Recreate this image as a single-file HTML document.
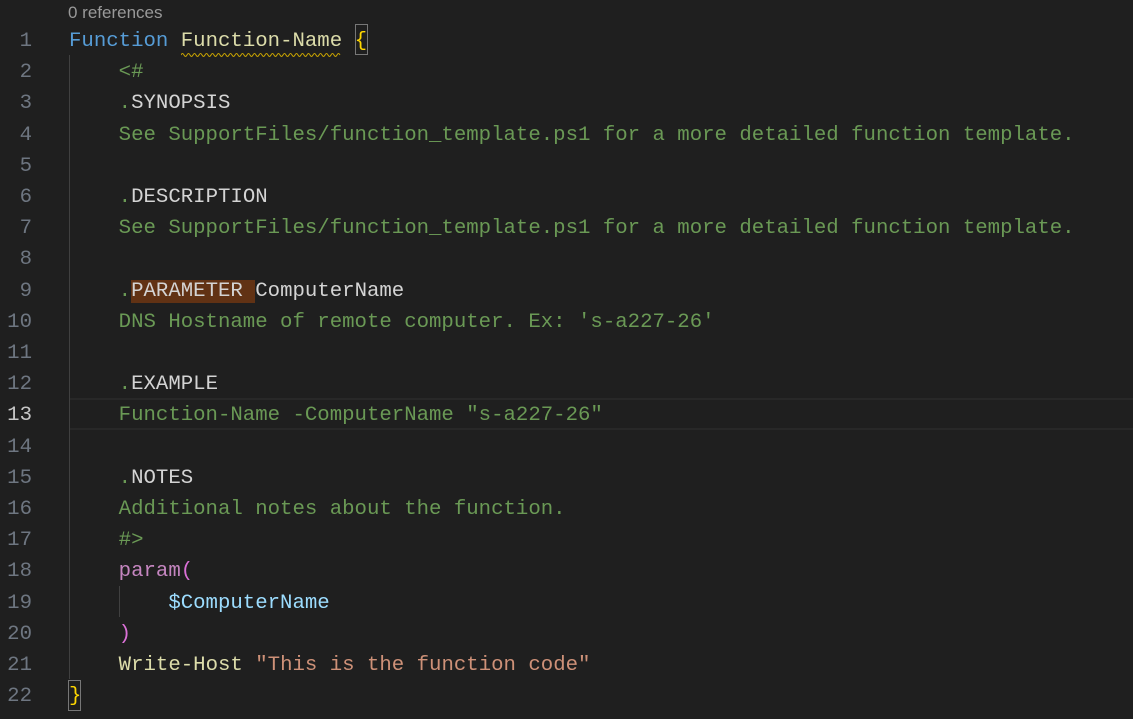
<!DOCTYPE html>
<html><head><meta charset="utf-8"><style>
html,body{margin:0;padding:0;background:#1f1f1f;width:1133px;height:719px;overflow:hidden}
.cl{position:absolute;left:68px;top:3px;font:17px "Liberation Sans",sans-serif;color:#999}
.w{position:absolute;left:0;top:6px;width:1133px;height:713px}
.r{position:absolute;left:0;height:31.2px;line-height:31.2px;width:1133px;font:20.7px "Liberation Mono",monospace;white-space:pre}
.n{position:absolute;right:1101px;color:#6e7681;text-align:right}
.t{position:absolute;left:69px;color:#d4d4d4}
.c{color:#6a9955}.k{color:#569cd6}.f{color:#dcdcaa}.y{color:#ffd700}.p{color:#c586c0}.v{color:#9cdcfe}.s{color:#ce9178}.o{color:#da70d6}
.g{position:absolute;left:69px;width:1px;background:#404040}
</style></head><body>
<div class="cl">0 references</div>
<div style="position:absolute;left:69px;top:398px;width:1064px;height:28px;border-top:2px solid #282828;border-bottom:2px solid #282828"></div>
<div class="g" style="top:55px;height:624px"></div>
<div class="g" style="left:119px;top:586px;height:31px"></div>
<div style="position:absolute;left:355px;top:24px;width:11px;height:29px;border:1px solid #777"></div>
<div style="position:absolute;left:68px;top:680px;width:11px;height:29px;border:1px solid #777"></div>
<svg style="position:absolute;left:181px;top:52px" width="162" height="5"><path d="M0 3 Q1.5 0 3 3 T6 3 T9 3 T12 3 T15 3 T18 3 T21 3 T24 3 T27 3 T30 3 T33 3 T36 3 T39 3 T42 3 T45 3 T48 3 T51 3 T54 3 T57 3 T60 3 T63 3 T66 3 T69 3 T72 3 T75 3 T78 3 T81 3 T84 3 T87 3 T90 3 T93 3 T96 3 T99 3 T102 3 T105 3 T108 3 T111 3 T114 3 T117 3 T120 3 T123 3 T126 3 T129 3 T132 3 T135 3 T138 3 T141 3 T144 3 T147 3 T150 3 T153 3 T156 3 T159 3" fill="none" stroke="#cca700" stroke-width="1"/></svg>
<div class="w">
<div class="r" style="top:24px"><span class="n">1</span><span class="t"><span class="k">Function</span> <span class="f">Function-Name</span> <span class="y">{</span></span></div>
<div class="r" style="top:55.2px"><span class="n">2</span><span class="t c">    &lt;#</span></div>
<div class="r" style="top:86.4px"><span class="n">3</span><span class="t">    <span class="c">.</span>SYNOPSIS</span></div>
<div class="r" style="top:117.6px"><span class="n">4</span><span class="t c">    See SupportFiles/function_template.ps1 for a more detailed function template.</span></div>
<div class="r" style="top:148.8px"><span class="n">5</span></div>
<div class="r" style="top:180px"><span class="n">6</span><span class="t">    <span class="c">.</span>DESCRIPTION</span></div>
<div class="r" style="top:211.2px"><span class="n">7</span><span class="t c">    See SupportFiles/function_template.ps1 for a more detailed function template.</span></div>
<div class="r" style="top:242.4px"><span class="n">8</span></div>
<div class="r" style="top:273.6px"><span class="n">9</span><span class="t">    <span class="c">.</span><span style="background:#613214">PARAMETER </span>ComputerName</span></div>
<div class="r" style="top:304.8px"><span class="n">10</span><span class="t c">    DNS Hostname of remote computer. Ex: 's-a227-26'</span></div>
<div class="r" style="top:336px"><span class="n">11</span></div>
<div class="r" style="top:367.2px"><span class="n">12</span><span class="t">    <span class="c">.</span>EXAMPLE</span></div>
<div class="r" style="top:398.4px"><span class="n" style="color:#c6c6c6">13</span><span class="t c">    Function-Name -ComputerName "s-a227-26"</span></div>
<div class="r" style="top:429.6px"><span class="n">14</span></div>
<div class="r" style="top:460.8px"><span class="n">15</span><span class="t">    <span class="c">.</span>NOTES</span></div>
<div class="r" style="top:492px"><span class="n">16</span><span class="t c">    Additional notes about the function.</span></div>
<div class="r" style="top:523.2px"><span class="n">17</span><span class="t c">    #&gt;</span></div>
<div class="r" style="top:554.4px"><span class="n">18</span><span class="t">    <span class="p">param</span><span class="o">(</span></span></div>
<div class="r" style="top:585.6px"><span class="n">19</span><span class="t v">        $ComputerName</span></div>
<div class="r" style="top:616.8px"><span class="n">20</span><span class="t o">    )</span></div>
<div class="r" style="top:648px"><span class="n">21</span><span class="t">    <span class="f">Write-Host</span> <span class="s">"This is the function code"</span></span></div>
<div class="r" style="top:679.2px"><span class="n">22</span><span class="t y">}</span></div>
</div>
</body></html>
